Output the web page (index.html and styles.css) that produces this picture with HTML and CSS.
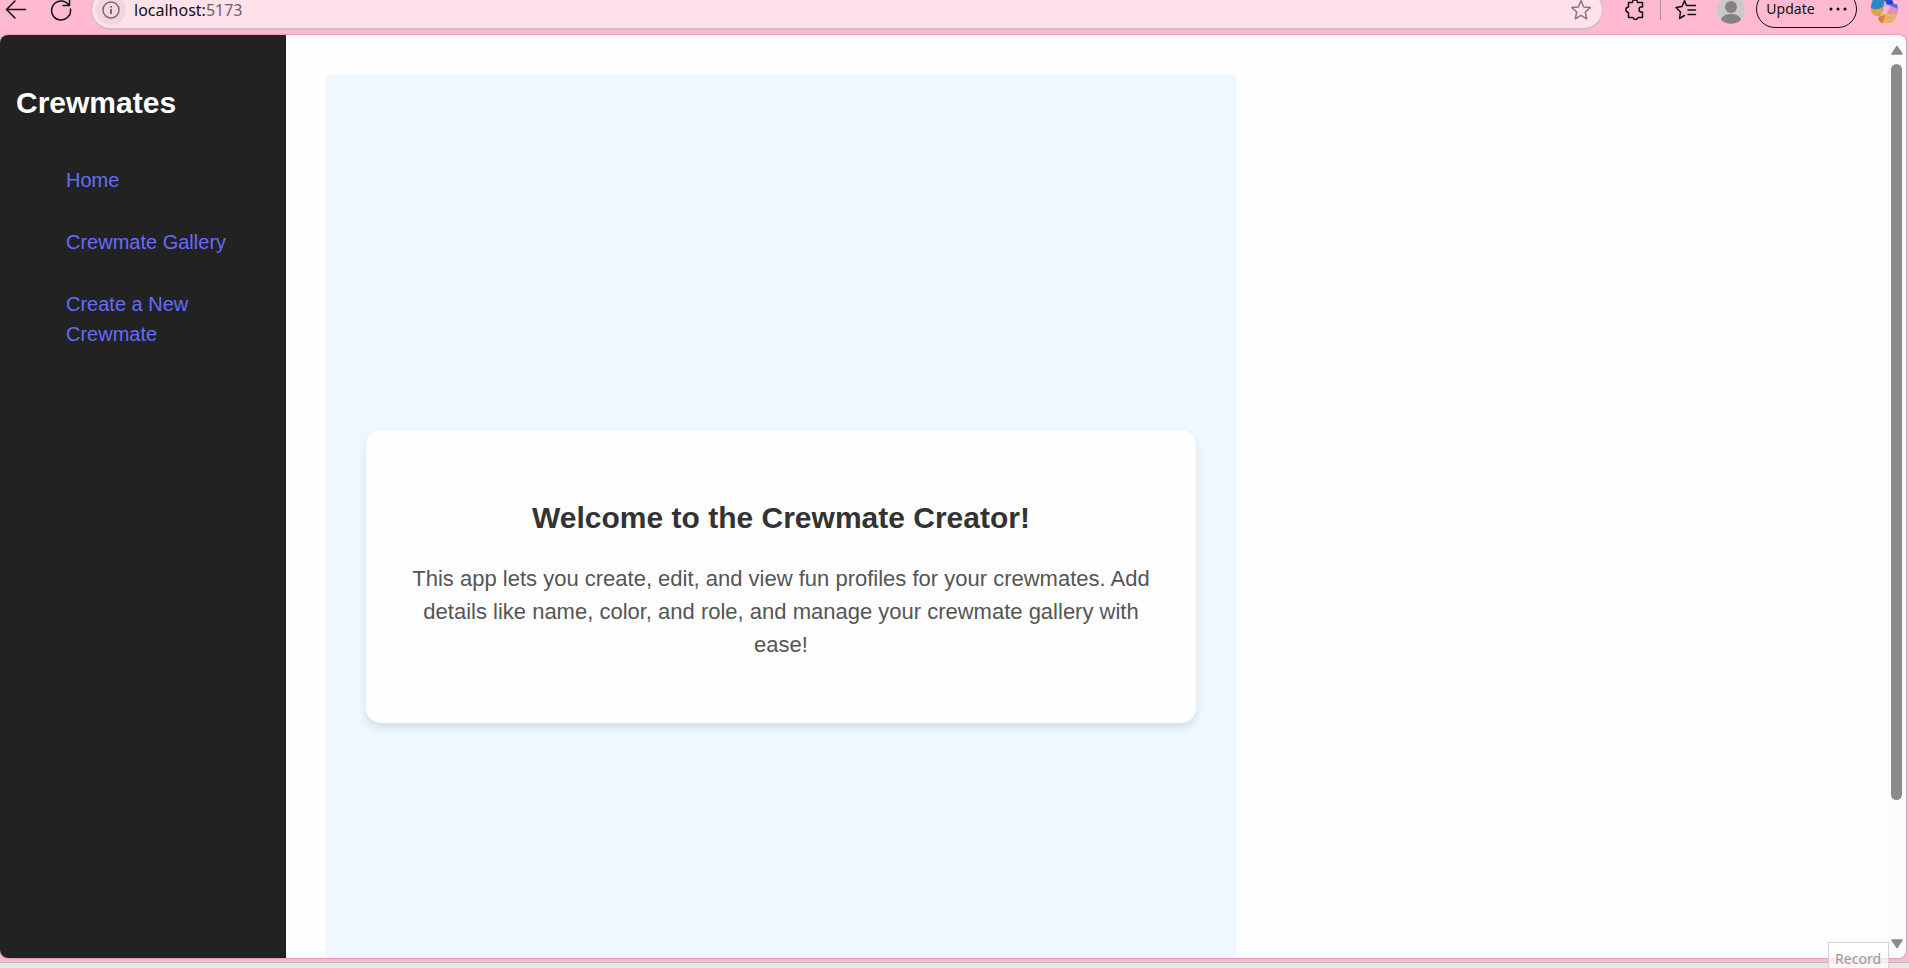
FILE: index.html
```html
<!DOCTYPE html>
<html lang="en">
<head>
<meta charset="utf-8">
<title>Crewmates</title>
<link rel="stylesheet" href="styles.css">
</head>
<body>
<header class="toolbar">
  <button class="icon-btn back" aria-label="Back"><svg width="22" height="20" viewBox="0 0 22 20"><path d="M20.500 9.500H2M10 1L1.500 9.500L10 18"/></svg></button>
  <button class="icon-btn reload" aria-label="Reload"><svg width="22" height="20" viewBox="0 0 22 20"><path d="M18.500 4.500A9.500 9.500 0 1 0 20.500 9M19.500 -1V5.500H13"/></svg></button>
  <div class="address">
    <button class="info" aria-label="Site information"><svg width="18" height="18" viewBox="0 0 18 18"><circle cx="9" cy="9" r="8"/><path d="M9 8V13M9 5V6.500" stroke-width="2"/></svg></button>
    <div class="url" role="textbox" aria-label="Address" tabindex="0">localhost:<span class="port">5173</span></div>
    <button class="icon-btn star" aria-label="Add to favorites"><svg width="20" height="20" viewBox="0 0 20 20"><path d="M10 .8L12.700 7L19.200 7.600L14.300 12L15.700 18.800L10 15.300L4.300 18.800L5.700 12L.8 7.600L7.300 7Z"/></svg></button>
  </div>
  <button class="icon-btn puzzle" aria-label="Extensions"><svg width="20" height="20" viewBox="0 0 20 20"><path d="M3.500 2.500H7.500C7 -1 13 -1 12.500 2.500H17.500V7H16C13.500 7 13.500 12 16 12H17.500V17.500H13C12.500 20 8.500 20 8 17.500H3.500V12.500C0 12 0 7.500 3.500 7Z"/></svg></button>
  <span class="rule"></span>
  <button class="icon-btn favorites" aria-label="Favorites"><svg width="22" height="20" viewBox="0 0 22 20"><path d="M20.500 5.500H13.500L11.500 5.500L9.500 .8L7 6.500L1 7.500L5.500 12L4.500 18.500L9.500 15.500M13 10H20.500M13 14.500H20.500"/></svg></button>
  <button class="icon-btn avatar" aria-label="Profile"><svg width="28" height="28" viewBox="0 0 28 28"><circle cx="14" cy="14" r="14" fill="#cbc8c8"/><circle cx="14" cy="11" r="6" fill="#858282"/><path d="M4 24C5 16 23 16 24 24C18 29 10 29 4 24Z" fill="#858282"/></svg></button>
  <button class="update">Update <svg width="18" height="4" viewBox="0 0 18 4"><circle cx="2" cy="2" r="1.500"/><circle cx="9" cy="2" r="1.500"/><circle cx="16" cy="2" r="1.500"/></svg></button>
  <button class="icon-btn copilot" aria-label="Copilot"><svg width="30" height="28" viewBox="0 0 30 28"><path d="M4 0H16L12 16H2Q0 12 2 6Z" fill="#2f86c5"/><path d="M1 12Q7 15 13 11L11 20H6Q1 18 1 12Z" fill="#d9a548"/><path d="M13 0H21L24 9H17Z" fill="#2443d0"/><path d="M20 8H27L28 13H21Z" fill="#5364f0"/><path d="M15 9Q18 7 21 10L28 13Q29 15 26 19H12Z" fill="#dc91bc"/><path d="M15 10Q18 8 20 11L16 19H12Z" fill="#f7b9d6"/><path d="M12 18H27Q25 26 21 27H12Q8 26 9 21Z" fill="#edb06c"/><path d="M8 21L15 19L13 27Q9 27 8 21Z" fill="#d9823f"/></svg></button>
</header>
<div class="viewport">
  <nav class="sidebar">
    <h2>Crewmates</h2>
    <ul>
      <li><a href="#home">Home</a></li>
      <li><a href="#gallery">Crewmate Gallery</a></li>
      <li><a href="#create">Create a New Crewmate</a></li>
    </ul>
  </nav>
  <main class="content">
    <section class="panel">
      <div class="card">
        <h1>Welcome to the Crewmate Creator!</h1>
        <p>This app lets you create, edit, and view fun profiles for your crewmates. Add details like name, color, and role, and manage your crewmate gallery with ease!</p>
      </div>
    </section>
  </main>
  <div class="scrollbar" aria-hidden="true">
    <svg width="12" height="10" viewBox="0 0 12 10"><path d="M6 1.500L11 9H1Z"/></svg>
    <div class="track"><div class="thumb"></div></div>
    <svg width="12" height="10" viewBox="0 0 12 10"><path d="M6 8.500L1 1H11Z"/></svg>
  </div>
</div>
<footer class="edge"></footer>
<div class="record">Record</div>
</body>
</html>
```
FILE: styles.css
```css
* { box-sizing: border-box; }
html, body { height: 100%; }
body {
  margin: 0;
  display: flex;
  flex-direction: column;
  overflow: hidden;
  position: relative;
  background: #ffb9d1;
  font: 20px/30px "Liberation Sans", Arial, sans-serif;
}
button { padding: 0; border: 0; background: none; font: inherit; color: inherit; }
svg { display: block; overflow: visible; }

.toolbar {
  height: 35px;
  flex: none;
  display: flex;
  align-items: flex-start;
  padding: 0 9px 0 5px;
  overflow: hidden;
  font-family: "Noto Sans", "Open Sans", sans-serif;
}
.icon-btn svg { fill: none; stroke: #111; stroke-width: 1.5; stroke-linejoin: round; stroke-linecap: round; }
.reload { margin-left: 23px; }
.address {
  flex: 1;
  height: 40px;
  margin: -10px 0 0 19px;
  padding: 0 11px 0 4px;
  display: flex;
  align-items: center;
  border: 1px solid #d9b8c3;
  border-bottom-width: 2px;
  border-radius: 20px;
  background: #ffe1ea;
}
.info {
  width: 30px;
  height: 30px;
  display: grid;
  place-items: center;
  border-radius: 50%;
  background: #f3d5de;
}
.info svg { fill: none; stroke: #756a6d; stroke-width: 1.5; }
.url { flex: 1; margin-left: 8px; font-size: 16px; line-height: 18px; color: #111; }
.port { color: #6b5f63; }
.star svg { stroke: #85787c; }
.puzzle { margin-left: 22px; }
.rule { width: 1px; height: 20px; margin: 0 14px 0 15px; background: #b58a99; }
.avatar { margin: -4px 0 0 20px; }
.avatar svg { stroke: none; }
.update {
  height: 38px;
  width: 101px;
  margin: -10px 13px 0 11px;
  display: flex;
  align-items: center;
  justify-content: center;
  gap: 14px;
  border: 1px solid #111;
  border-radius: 19px;
  font-size: 14px;
  color: #111;
}
.copilot svg { stroke: none; }
.copilot { margin-top: -4px; }

.viewport {
  flex: 1;
  min-height: 0;
  display: flex;
  margin-right: 3px;
  overflow: hidden;
  border-radius: 8px;
  background: #fefefe;
  box-shadow: 0 0 2px #a06478;
}
.sidebar {
  width: 286px;
  flex: none;
  padding: 20px 16px;
  background: #222;
  color: #fff;
}
.sidebar h2 { margin: 25px 0 40px; font-size: 30px; line-height: 45px; }
.sidebar ul { margin: 0; padding: 0 0 0 50px; list-style: none; }
.sidebar li { margin: 0 0 32px; }
.sidebar a { color: #646cff; text-decoration: none; }

.content { flex: 1; min-width: 0; padding: 40px; overflow: hidden; }
.panel {
  box-sizing: content-box;
  max-width: 830px;
  min-height: calc(100vh - 46px);
  padding: 40px;
  display: flex;
  align-items: center;
  background: #eff7ff;
}
.card {
  flex: 1;
  padding: 40px;
  border-radius: 15px;
  background: #fefefe;
  box-shadow: 0 5px 10px rgba(0, 0, 0, 0.1);
  text-align: center;
}
.card h1 { margin: 25px 0 22px; color: #333; font-size: 30px; line-height: 45px; }
.card p { margin: 0 0 22px; color: #555; font-size: 22px; line-height: 33px; }

.scrollbar {
  width: 19px;
  flex: none;
  display: flex;
  flex-direction: column;
  align-items: center;
  padding: 10px 0 9px;
  background: #fbfbfb;
  fill: #8b8b8b;
  stroke: #8b8b8b;
  stroke-width: 1.5;
  stroke-linejoin: round;
}
.track { flex: 1; width: 11px; margin: 9px 0; }
.thumb { height: 85%; border-radius: 6px; background: #8b8b8b; }

.edge { height: 6px; flex: none; margin-top: 4px; border-top: 1px solid #bbb; background: #e8e8e8; }
.record {
  position: absolute;
  right: 20px;
  bottom: 0;
  padding: 7px 7px 0 6px;
  border: 1px solid #d0d3d8;
  border-bottom: 0;
  background: rgba(255, 255, 255, 0.7);
  color: #999;
  font: 14px/18px "Noto Sans", "Open Sans", sans-serif;
}
```
